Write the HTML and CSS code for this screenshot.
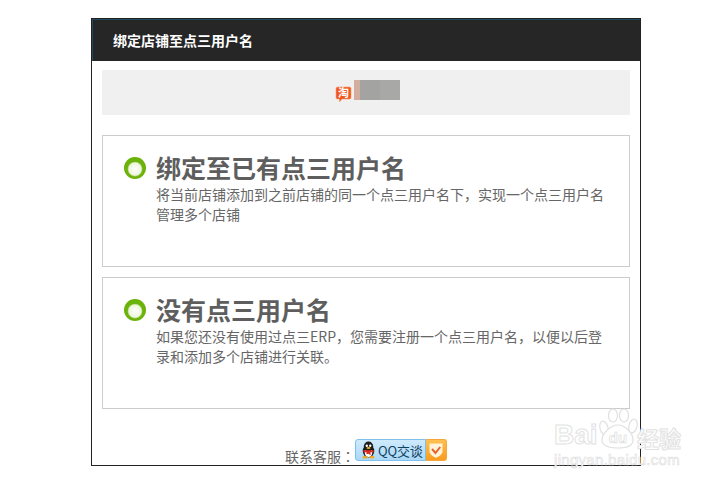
FILE: index.html
```html
<!DOCTYPE html>
<html lang="zh-CN">
<head>
<meta charset="utf-8">
<title>绑定店铺至点三用户名</title>
<link rel="stylesheet" href="styles.css">
</head>
<body>
<div class="dialog">
  <div class="head">绑定店铺至点三用户名</div>
  <div class="main">
    <div class="shop">
      <svg class="tao" width="17" height="17" viewBox="0 0 17 17"><path d="M2.500 1h12A1.500 1.500 0 0 1 16 2.500v9a1.500 1.500 0 0 1-1.500 1.500H7l-2.500 3v-3h-2A1.500 1.500 0 0 1 1 11.500v-9A1.500 1.500 0 0 1 2.500 1z" fill="#f0561f" stroke="#f8a070" stroke-width=".6"/><text x="8.500" y="11" class="tao-text">淘</text></svg>
      <div class="mosaic"><i class="m-skin"></i><i class="m-a"></i><i class="m-b"></i></div>
    </div>
    <div class="option">
      <span class="ring"></span>
      <div class="copy">
        <h2>绑定至已有点三用户名</h2>
        <p>将当前店铺添加到之前店铺的同一个点三用户名下，实现一个点三用户名管理多个店铺</p>
      </div>
    </div>
    <div class="option">
      <span class="ring"></span>
      <div class="copy">
        <h2>没有点三用户名</h2>
        <p>如果您还没有使用过点三ERP，您需要注册一个点三用户名，以便以后登录和添加多个店铺进行关联。</p>
      </div>
    </div>
    <div class="contact">
      <span class="contact-label">联系客服<span class="colon" lang="zh-Hant">：</span></span>
      <span class="qq">
        <span class="qq-l">
          <svg width="17" height="18" viewBox="0 0 17 18"><ellipse cx="8.500" cy="10" rx="5.800" ry="6.500" fill="#1c1c1c"/><ellipse cx="8.500" cy="11.500" rx="3.800" ry="4.600" fill="#fff"/><ellipse cx="8.500" cy="5.500" rx="4.700" ry="5" fill="#1c1c1c"/><circle cx="6.800" cy="4.800" r="1.200" fill="#fff"/><circle cx="10.200" cy="4.800" r="1.200" fill="#fff"/><ellipse cx="8.500" cy="7" rx="2" ry="1" fill="#f5b21a"/><path d="M3.200 9.200h10.600v2h-3.300v3l-2-1.500-2 .5V11.200H3.200z" fill="#dd2a1c"/><ellipse cx="5" cy="16.300" rx="2.600" ry="1.200" fill="#f5a81a"/><ellipse cx="12" cy="16.300" rx="2.600" ry="1.200" fill="#f5a81a"/></svg>
          <span class="qq-text">QQ交谈</span>
        </span>
        <span class="qq-r">
          <svg width="16" height="17" viewBox="0 0 16 17"><path d="M1.500 1.500h13v7.500c0 3.500-3.500 5.500-6.500 6.800-3-1.300-6.500-3.300-6.500-6.800z" fill="#fff3da"/><path d="M4 7l3.500 4 4.700-6" fill="none" stroke="#e8622a" stroke-width="2"/></svg>
        </span>
      </span>
    </div>
  </div>
</div>
<div class="mark">
  <div class="mark-top">
    <span class="mark-bai">Bai</span>
    <svg class="mark-paw" width="40" height="41" viewBox="0 0 40 41"><g fill="#fff" stroke="#e0e0e0" stroke-width="1.200"><ellipse cx="6" cy="20" rx="4" ry="7" transform="rotate(-15 6 20)"/><ellipse cx="15" cy="7.500" rx="4.500" ry="6.500"/><ellipse cx="26" cy="7.500" rx="4.500" ry="6.500"/><ellipse cx="35" cy="18" rx="4" ry="7" transform="rotate(15 35 18)"/><path d="M20 17c7 0 15 8 15 15 0 6-6 8-15 8S4 38 4 32c0-7 9-15 16-15z"/></g><text x="20" y="35" class="mark-du">du</text></svg>
    <span class="mark-jy">经验</span>
  </div>
  <div class="mark-url">jingyan.baidu.com</div>
</div>
</body>
</html>
```

FILE: styles.css
```css
* { box-sizing: border-box; }
html, body { margin: 0; padding: 0; background: #fff; }
body {
  position: relative;
  width: 723px;
  height: 486px;
  overflow: hidden;
  padding: 18px 0 0 91px;
  font-family: "Noto Sans CJK SC", "Liberation Sans", sans-serif;
}
.dialog {
  width: 550px;
  height: 448px;
  border: 1px solid #222;
  overflow: hidden;
  background: #fff;
}
.head {
  height: 42px;
  padding-left: 20px;
  background: #262626;
  border-top: 1px solid #1d4a5c;
  border-left: 1px solid #1d4a5c;
  color: #fff;
  font-size: 14px;
  font-weight: 700;
  line-height: 41px;
}
.main { padding: 9px 10px 0; }
.shop {
  height: 45px;
  background: #f0f0f0;
  display: flex;
  justify-content: center;
  align-items: center;
  padding-left: 2px;
}
.tao { flex: none; margin-top: 3px; overflow: visible; }
.tao-text { fill: #fff; font-size: 11px; font-weight: 700; text-anchor: middle; }
.mosaic { display: flex; height: 20px; margin-left: 2px; margin-top: -5px; }
.mosaic i { display: block; height: 100%; }
.m-skin { width: 6px; background: #d3ad9d; }
.m-a { width: 20px; background: #a3a3a1; }
.m-b { width: 20px; background: #a8a8a6; }
.option {
  height: 132px;
  margin-top: 20px;
  padding: 16px 20px 0 21px;
  border: 1px solid #ccc;
  display: flex;
  align-items: flex-start;
  gap: 10px;
}
.option + .option { margin-top: 10px; }
.ring {
  flex: none;
  width: 22px;
  height: 22px;
  margin-top: 5px;
  border-radius: 50%;
  background: radial-gradient(circle at 50% 55%, #fff 0, #eef6dc 38%, #6cb30c 47%, #6ab209 78%, #a6d56a 100%);
}
.copy { width: 452px; }
.copy h2 {
  margin: 0 0 2px;
  color: #5e5e5e;
  font-size: 25px;
  font-weight: 700;
  line-height: 30px;
}
.copy p {
  margin: 0;
  color: #666;
  font-size: 14px;
  line-height: 20px;
}
.contact {
  display: flex;
  justify-content: center;
  align-items: flex-start;
  height: 24px;
  margin-top: 30px;
  color: #666;
  font-size: 14px;
}
.contact-label { line-height: 20px; margin-top: 7px; }
.colon { font-family: "Noto Sans CJK TC", sans-serif; }
.qq {
  display: flex;
  width: 92px;
  height: 22px;
  font-size: 13px;
  color: #10405f;
}
.qq-l {
  flex: 1;
  display: flex;
  align-items: center;
  gap: 1px;
  padding-left: 4px;
  background: linear-gradient(#cfeafc, #a9d8f7);
  border: 1px solid #7fc0ea;
  border-radius: 3px 0 0 3px;
}
.qq-l svg { flex: none; }
.qq-text { white-space: nowrap; letter-spacing: -.2px; }
.qq-r {
  flex: none;
  width: 21px;
  display: flex;
  align-items: center;
  justify-content: center;
  background: linear-gradient(#ffbf52, #f99c1f);
  border: 1px solid #f5a83a;
  border-left: 0;
  border-radius: 0 3px 3px 0;
}
.mark {
  position: absolute;
  left: 554px;
  top: 408px;
  width: 140px;
  color: #fff;
  -webkit-text-stroke: 1px #e2e2e2;
  font-family: "Liberation Sans", sans-serif;
}
.mark-top { display: flex; align-items: flex-end; height: 41px; }
.mark-bai { width: 44px; font-size: 28px; font-weight: 700; line-height: 28px; }
.mark-paw { flex: none; }
.mark-du { fill: #fff; stroke: #d8d8d8; stroke-width: .6px; font-size: 15px; font-weight: 700; text-anchor: middle; }
.mark-jy { margin-left: -1px; font-family: "Noto Sans CJK SC", sans-serif; font-size: 22px; line-height: 24px; font-weight: 700; white-space: nowrap; }
.mark-url { margin-top: 2px; font-size: 15px; line-height: 18px; letter-spacing: .3px; -webkit-text-stroke: .6px #ddd; white-space: nowrap; }
```
